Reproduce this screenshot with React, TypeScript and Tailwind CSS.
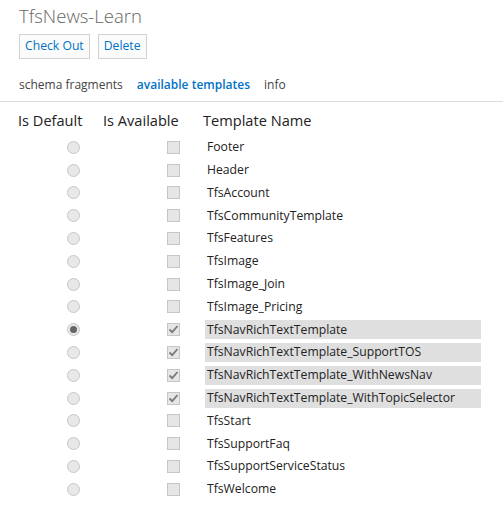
const templates = [
  { name: "Footer", available: false, isDefault: false },
  { name: "Header", available: false, isDefault: false },
  { name: "TfsAccount", available: false, isDefault: false },
  { name: "TfsCommunityTemplate", available: false, isDefault: false },
  { name: "TfsFeatures", available: false, isDefault: false },
  { name: "TfsImage", available: false, isDefault: false },
  { name: "TfsImage_Join", available: false, isDefault: false },
  { name: "TfsImage_Pricing", available: false, isDefault: false },
  { name: "TfsNavRichTextTemplate", available: true, isDefault: true },
  { name: "TfsNavRichTextTemplate_SupportTOS", available: true, isDefault: false },
  { name: "TfsNavRichTextTemplate_WithNewsNav", available: true, isDefault: false },
  { name: "TfsNavRichTextTemplate_WithTopicSelector", available: true, isDefault: false },
  { name: "TfsStart", available: false, isDefault: false },
  { name: "TfsSupportFaq", available: false, isDefault: false },
  { name: "TfsSupportServiceStatus", available: false, isDefault: false },
  { name: "TfsWelcome", available: false, isDefault: false },
];

const Radio = ({ checked }: { checked: boolean }) => (
  <div className="flex h-[13px] w-[13px] items-center justify-center rounded-full border border-[#c6c6c6] bg-[#e8e8e8]">
    {checked && <div className="h-[7px] w-[7px] rounded-full bg-[#666]" />}
  </div>
);

const Check = ({ checked }: { checked: boolean }) => (
  <div className="flex h-[13px] w-[13px] items-center justify-center border border-[#c6c6c6] bg-[#e6e6e6]">
    {checked && (
      <svg width="11" height="11" viewBox="0 0 11 11">
        <path d="M1.5 5.5 L4.2 8.2 L9.5 2" fill="none" stroke="#7a7a7a" strokeWidth="1.8" />
      </svg>
    )}
  </div>
);

export default function App() {
  return (
    <div className="h-[514px] w-[503px] bg-white font-['Open_Sans',sans-serif] text-[#333]">
      <div className="px-[19px] pt-[3px]">
        <h1 className="text-[18.5px] font-light leading-[26px] text-[#666]">TfsNews-Learn</h1>
        <div className="mt-[5px] flex gap-[8px]">
          <button className="h-[25px] border border-[#d2d2d2] bg-[#fbfbfb] px-[5px] text-[12.2px] text-[#0072c6]">
            Check Out
          </button>
          <button className="h-[25px] border border-[#d2d2d2] bg-[#fbfbfb] px-[5px] text-[12.2px] text-[#0072c6]">
            Delete
          </button>
        </div>
        <div className="mt-[17px] flex gap-[14px] text-[12px] leading-[18px]">
          <span className="text-[#444]">schema fragments</span>
          <span className="font-semibold text-[#0072c6]">available templates</span>
          <span className="text-[#444]">info</span>
        </div>
      </div>
      <div className="mt-[7px] h-px bg-[#dcdcdc]" />
      <div className="pt-[7px]">
        <div className="flex h-[24px] items-center text-[14.6px] text-[#222]">
          <div className="w-[103px] pl-[18px]">Is Default</div>
          <div className="w-[100px]">Is Available</div>
          <div>Template Name</div>
        </div>
        <div className="mt-[3px]">
          {templates.map((t) => (
            <div key={t.name} className="flex h-[22.8px] items-center">
              <div className="flex w-[167px] pl-[67px]">
                <Radio checked={t.isDefault} />
              </div>
              <div className="flex w-[38px]">
                <Check checked={t.available} />
              </div>
              <div
                className={
                  "flex h-[19px] w-[276px] items-center px-[2px] text-[12.2px] text-[#222] " +
                  (t.available ? "bg-[#dfdfdf]" : "")
                }
              >
                {t.name}
              </div>
            </div>
          ))}
        </div>
      </div>
    </div>
  );
}
